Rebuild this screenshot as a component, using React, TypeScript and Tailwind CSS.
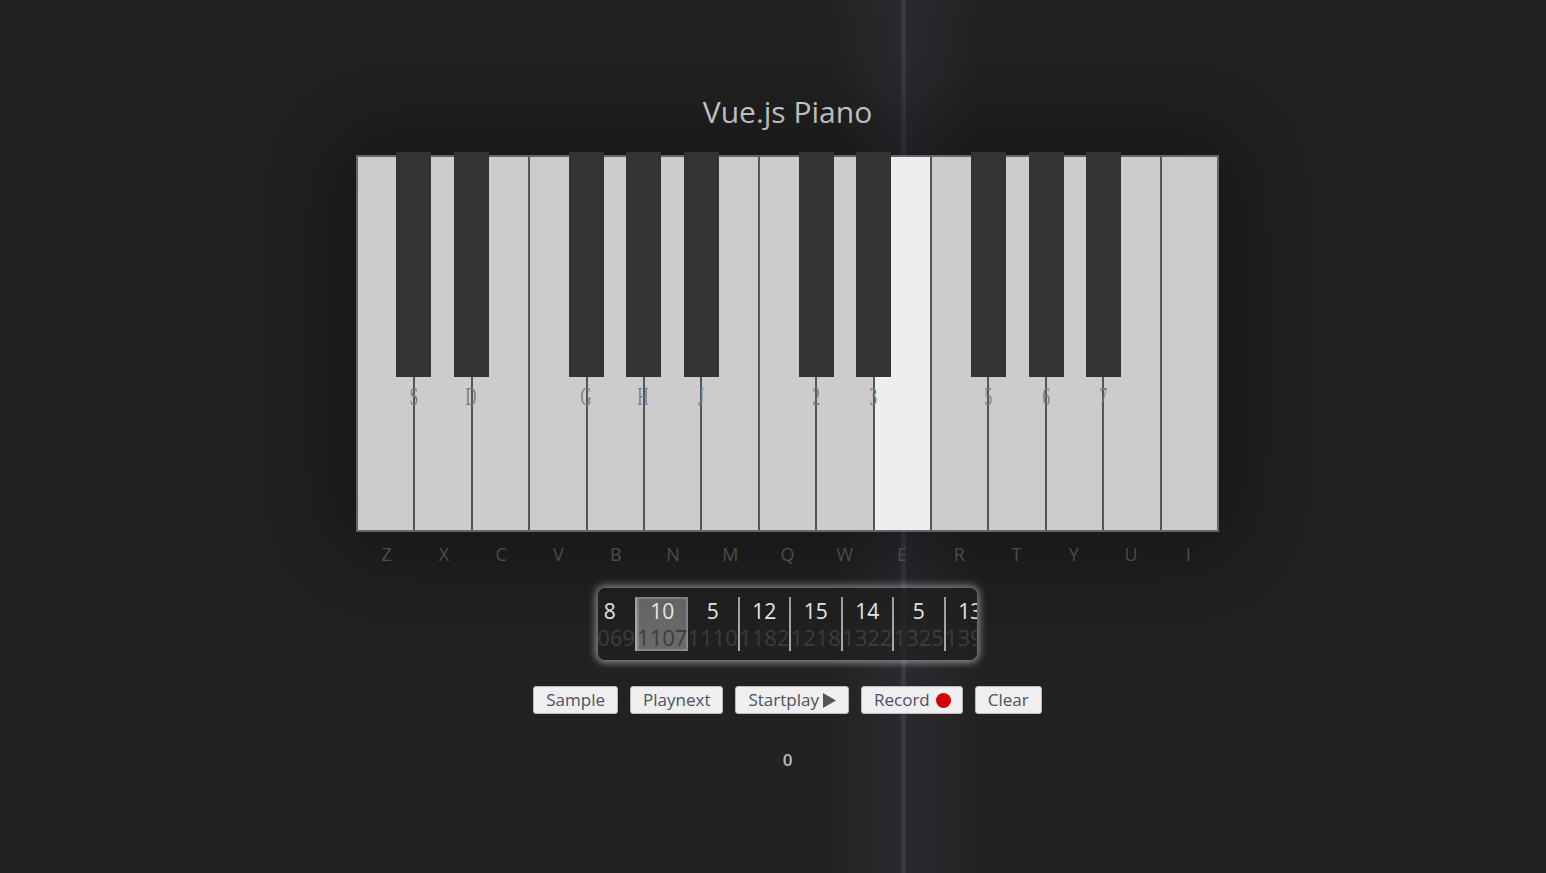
import React from "react";

const whiteKeys = ["Z", "X", "C", "V", "B", "N", "M", "Q", "W", "E", "R", "T", "Y", "U", "I"];

// black keys sit on the boundary after white key index `at`
const blackKeys = [
  { at: 1, label: "S" },
  { at: 2, label: "D" },
  { at: 4, label: "G" },
  { at: 5, label: "H" },
  { at: 6, label: "J" },
  { at: 8, label: "2" },
  { at: 9, label: "3" },
  { at: 11, label: "5" },
  { at: 12, label: "6" },
  { at: 13, label: "7" },
];

const notes = [
  { key: 8, time: 1069 },
  { key: 10, time: 1107, active: true },
  { key: 5, time: 1110 },
  { key: 12, time: 1182 },
  { key: 15, time: 1218 },
  { key: 14, time: 1322 },
  { key: 5, time: 1325 },
  { key: 13, time: 1396 },
];

const PRESSED = 9;

function Piano() {
  return (
    <div className="relative w-[863px] shadow-[0_0_90px_30px_rgba(0,0,0,0.35)]">
      <div className="relative flex h-[377px] border-2 border-[#666] bg-[#ccc]">
        {whiteKeys.map((k, i) => (
          <div
            key={k}
            className={`flex-1 ${i > 0 ? "border-l-2 border-[#555]" : ""} ${
              i === PRESSED ? "bg-[#eee]" : "bg-[#ccc]"
            }`}
          />
        ))}
        {blackKeys.map((b) => (
          <div
            key={b.label}
            className="absolute top-[-5px] flex w-[35px] flex-col items-center"
            style={{ left: b.at * 57.5 - 19.5 }}
          >
            <div className="h-[225px] w-[35px] bg-[#333]" />
            <div className="mt-[7px] scale-x-[0.6] font-['Liberation_Serif',serif] text-[25px] leading-[26px] text-[#7a7a7a]">
              {b.label}
            </div>
          </div>
        ))}
      </div>
    </div>
  );
}

function KeyLabels() {
  return (
    <div className="mt-[10px] flex w-[863px] px-[2px] font-['Open_Sans',sans-serif] text-[18px] leading-6 text-[#5e5e5e]">
      {whiteKeys.map((k) => (
        <div key={k} className="flex-1 text-center">
          {k}
        </div>
      ))}
    </div>
  );
}

function RecordTrack() {
  return (
    <div className="mt-[22px] h-[72px] w-[379px] overflow-hidden rounded-[7px] bg-[rgba(34,34,34,0.75)] py-[9px] shadow-[0_0_7px_3px_rgba(255,255,255,0.45)]">
      <div className="ml-[-13px] flex h-[54px] font-['Open_Sans',sans-serif]">
        {notes.map((n, i) => (
          <div
            key={i}
            className={`flex w-[51.5px] shrink-0 flex-col items-center leading-none ${
              n.active ? "border-2 border-[#8a8a8a] bg-[#6b6b6b]" : "border-r-2 border-[#aaa]"
            }`}
          >
            <div className={`text-[21px] text-[#f2f2f2] ${n.active ? "mt-[2px]" : "mt-[4px]"}`}>{n.key}</div>
            <div className="mt-[4px] whitespace-nowrap text-[22px] text-[#3e3e3e]">{n.time}</div>
          </div>
        ))}
      </div>
    </div>
  );
}

function Buttons() {
  const btn =
    "flex h-[28px] items-center rounded-[3px] border border-[#bbb] bg-[#efefef] px-[12px] text-[17px] text-[#4b5263]";
  return (
    <div className="mt-[26px] flex gap-[12px] font-['Open_Sans',sans-serif]">
      <button className={btn}>Sample</button>
      <button className={btn}>Playnext</button>
      <button className={btn}>
        Startplay
        <svg className="ml-[4px]" width="13" height="15" viewBox="0 0 13 15">
          <path d="M0 0 L13 7.5 L0 15 Z" fill="#555" />
        </svg>
      </button>
      <button className={`${btn} pr-[11px]`}>
        Record
        <span className="ml-[6px] inline-block h-[15px] w-[15px] rounded-full bg-[#d40000]" />
      </button>
      <button className={`${btn} px-[11px]`}>Clear</button>
    </div>
  );
}

export default function App() {
  return (
    <div className="relative min-h-[873px] w-full overflow-hidden bg-[#222]">
      {/* light streak in the background */}
      <div className="absolute inset-y-0 left-[830px] w-[150px] bg-[linear-gradient(to_right,rgba(60,55,70,0)_0%,rgba(60,55,72,0.35)_48%,rgba(60,55,72,0.35)_52%,rgba(60,55,70,0)_100%)]" />
      <div className="absolute inset-y-0 left-[901px] w-[5px] bg-[#3b3743]" />

      <div className="relative flex flex-col items-center pl-[29px] pt-[93px]">
        <h1 className="font-['Open_Sans',sans-serif] text-[30px] leading-[38px] text-[#ddd]">Vue.js Piano</h1>
        <div className="mt-[24px]">
          <Piano />
        </div>
        <KeyLabels />
        <RecordTrack />
        <Buttons />
        <div className="mt-[34px] font-['Open_Sans',sans-serif] text-[17px] font-semibold leading-6 text-[#bbb]">0</div>
      </div>
    </div>
  );
}
